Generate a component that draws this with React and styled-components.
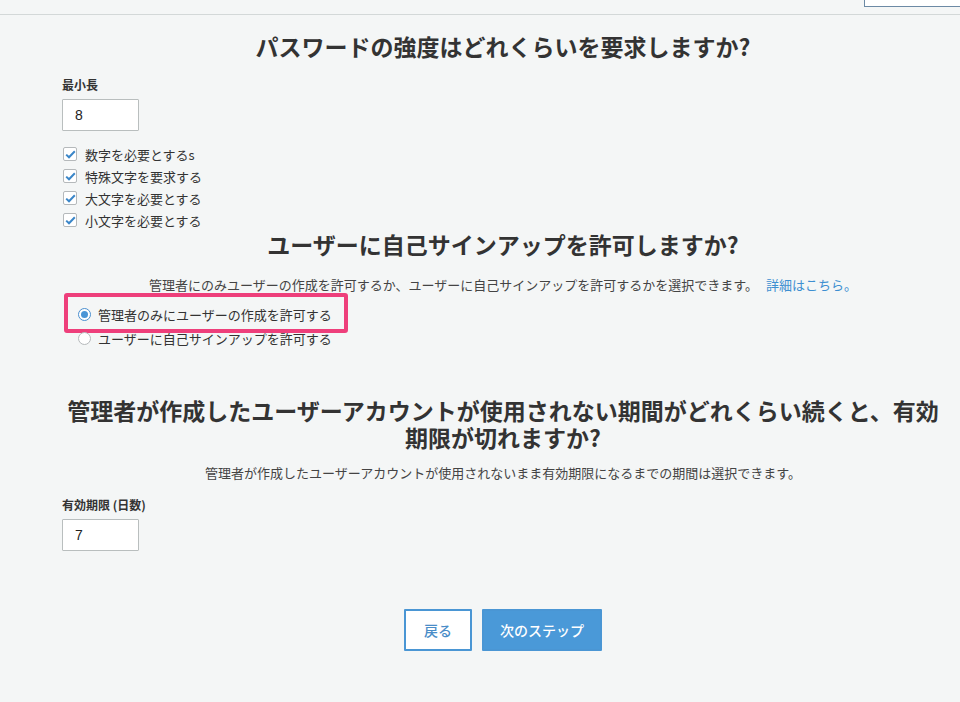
import React from 'react'
import styled, { createGlobalStyle } from 'styled-components'

const GlobalStyle = createGlobalStyle`
  html, body {
    margin: 0;
    padding: 0;
    background: #f4f6f6;
  }
  body {
    font-family: "Noto Sans CJK JP", "Noto Sans", "Liberation Sans", sans-serif;
    color: #333;
  }
`

const Page = styled.div`
  width: 960px;
  height: 702px;
  overflow: hidden;
  background: #f4f6f6;
`

const TopBar = styled.div`
  height: 14px;
  border-bottom: 1px solid #d3d8d8;
  display: flex;
  justify-content: flex-end;
  align-items: flex-start;
`

const TopButton = styled.div`
  width: 95px;
  height: 6px;
  background: #fff;
  border-left: 1px solid #6c8aa5;
  border-bottom: 1px solid #6c8aa5;
`

const Content = styled.main`
  margin-left: 62px;
  width: 882px;
  display: flex;
  flex-direction: column;
`

const Heading = styled.h2`
  margin: ${p => p.$mt || 0}px 0 0;
  font-size: 23px;
  line-height: 27px;
  font-weight: 700;
  text-align: center;
  color: #333;
`

const Description = styled.p`
  margin: ${p => p.$mt || 0}px 0 0;
  font-size: 13px;
  line-height: 18px;
  text-align: center;
  color: #444;
`

const MoreLink = styled.a`
  margin-left: 8px;
  color: #3d8fd1;
  text-decoration: none;
`

const FieldLabel = styled.label`
  display: block;
  margin-top: ${p => p.$mt || 0}px;
  font-size: 12px;
  line-height: 16px;
  font-weight: 700;
  color: #333;
`

const NumberInput = styled.input`
  box-sizing: border-box;
  margin-top: 6px;
  width: 77px;
  height: 32px;
  padding: 0 12px;
  border: 1px solid #b9bebe;
  border-radius: 1px;
  background: #fff;
  font-family: "Liberation Sans", sans-serif;
  font-size: 14px;
  color: #222;
  outline: none;
`

const CheckList = styled.div`
  margin-top: 12px;
  display: flex;
  flex-direction: column;
`

const CheckRow = styled.label`
  height: 22px;
  display: flex;
  align-items: center;
  gap: 8px;
  padding-left: 1px;
  font-size: 13px;
  color: #333;
`

const CheckBox = styled.span`
  box-sizing: border-box;
  width: 14px;
  height: 14px;
  border: 1px solid #b5b9bb;
  border-radius: 2px;
  background: #fff;
  display: flex;
  align-items: center;
  justify-content: center;
`

const RadioGroup = styled.div`
  margin-top: 8px;
  display: flex;
  flex-direction: column;
`

const RadioRow = styled.label`
  position: relative;
  height: 24px;
  display: flex;
  align-items: center;
  gap: 7px;
  padding-left: 16px;
  font-size: 13px;
  color: #333;

  ${p =>
    p.$highlight &&
    `
    &::after {
      content: '';
      position: absolute;
      left: 2px;
      top: -9px;
      width: 276px;
      height: 32px;
      border: 4px solid #ee3f7b;
      border-radius: 3px;
      pointer-events: none;
    }
  `}
`

const Radio = styled.span`
  box-sizing: border-box;
  width: 13px;
  height: 13px;
  border-radius: 50%;
  background: #fff;
  border: 1px solid ${p => (p.$checked ? '#4a8fcf' : '#b5b9bb')};
  display: flex;
  align-items: center;
  justify-content: center;

  &::before {
    content: '';
    display: ${p => (p.$checked ? 'block' : 'none')};
    width: 7px;
    height: 7px;
    border-radius: 50%;
    background: #4a95d6;
  }
`

const Actions = styled.div`
  margin-top: 58px;
  display: flex;
  justify-content: center;
  gap: 10px;
`

const Button = styled.button`
  box-sizing: border-box;
  height: 42px;
  padding: 0 ${p => (p.$primary ? 16 : 18)}px;
  border: 2px solid #4a96d4;
  border-radius: 1px;
  background: ${p => (p.$primary ? '#4a99d8' : '#fff')};
  color: ${p => (p.$primary ? '#fff' : '#4a8dc8')};
  font-family: "Noto Sans CJK JP", sans-serif;
  font-size: 14px;
  font-weight: 500;
  cursor: pointer;
`

const Check = () => (
  <CheckBox>
    <svg width="11" height="9" viewBox="0 0 11 9">
      <path d="M1.2 4.6 L4 7.3 L9.8 1.3" fill="none" stroke="#3a86c8" strokeWidth="2" />
    </svg>
  </CheckBox>
)

const options = ['数字を必要とするs', '特殊文字を要求する', '大文字を必要とする', '小文字を必要とする']

const App = () => (
  <Page>
    <GlobalStyle />
    <TopBar>
      <TopButton />
    </TopBar>
    <Content>
      <Heading $mt={18}>パスワードの強度はどれくらいを要求しますか?</Heading>

      <FieldLabel $mt={17}>最小長</FieldLabel>
      <NumberInput defaultValue="8" />
      <CheckList>
        {options.map(o => (
          <CheckRow key={o}>
            <Check />
            {o}
          </CheckRow>
        ))}
      </CheckList>

      <Heading>ユーザーに自己サインアップを許可しますか?</Heading>
      <Description $mt={18}>
        管理者にのみユーザーの作成を許可するか、ユーザーに自己サインアップを許可するかを選択できます。
        <MoreLink href="#">詳細はこちら。</MoreLink>
      </Description>
      <RadioGroup>
        <RadioRow $highlight>
          <Radio $checked />
          管理者のみにユーザーの作成を許可する
        </RadioRow>
        <RadioRow>
          <Radio />
          ユーザーに自己サインアップを許可する
        </RadioRow>
      </RadioGroup>

      <Heading $mt={47}>
        管理者が作成したユーザーアカウントが使用されない期間がどれくらい続くと、有効期限が切れますか?
      </Heading>
      <Description $mt={13}>
        管理者が作成したユーザーアカウントが使用されないまま有効期限になるまでの期間は選択できます。
      </Description>
      <FieldLabel $mt={15}>有効期限 (日数)</FieldLabel>
      <NumberInput defaultValue="7" />

      <Actions>
        <Button>戻る</Button>
        <Button $primary>次のステップ</Button>
      </Actions>
    </Content>
  </Page>
)

export default App
